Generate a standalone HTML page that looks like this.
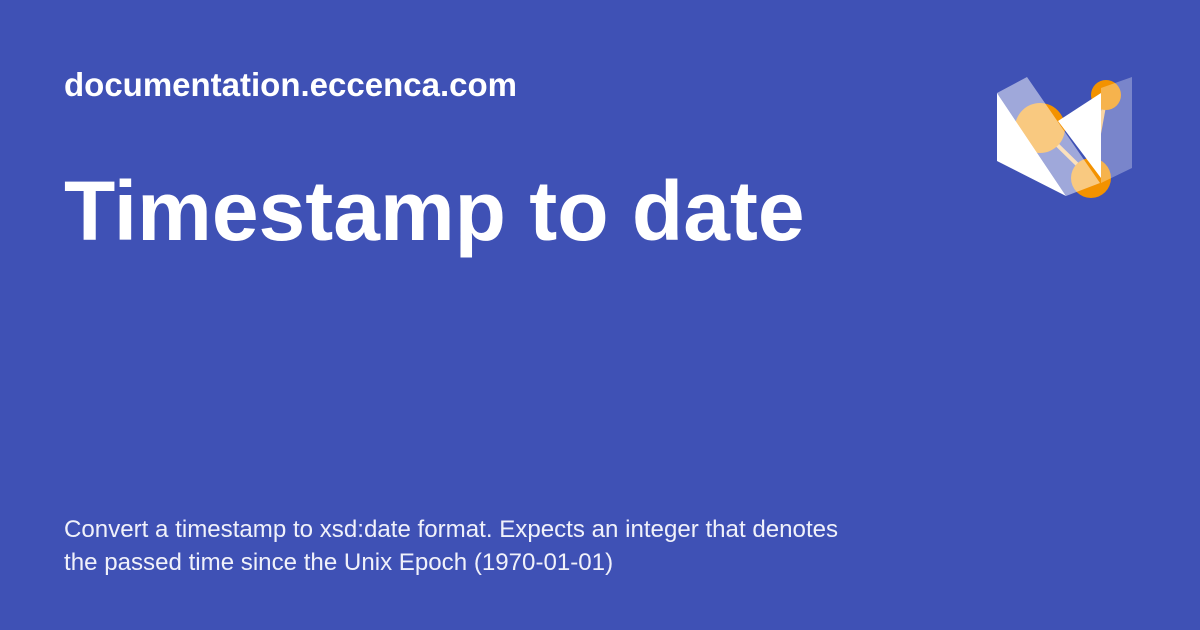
<!DOCTYPE html><html><head><style>
body{margin:0;width:1200px;height:630px;background:#3f51b5;font-family:"Liberation Sans",sans-serif;color:#fff;position:relative;overflow:hidden}
.d{position:absolute;left:64px;top:66px;font-size:33px;font-weight:bold}
.t{position:absolute;left:64px;top:163px;font-size:84px;font-weight:bold}
.p{position:absolute;left:64px;top:513px;font-size:24.1px;line-height:33px;color:#f0f1fa}
</style></head><body>
<div class="d">documentation.eccenca.com</div>
<div class="t">Timestamp to date</div>
<div class="p">Convert a timestamp to xsd:date format. Expects an integer that denotes<br>the passed time since the Unix Epoch (1970-01-01)</div>
<svg style="position:absolute;left:0;top:0" width="1200" height="630">
<line x1="1040" y1="128" x2="1091" y2="178" stroke="#f7c27a" stroke-width="4"/>
<line x1="1106" y1="95" x2="1091" y2="178" stroke="#f7c27a" stroke-width="4"/>
<circle cx="1040" cy="128" r="25" fill="#f39200"/>
<circle cx="1106" cy="95" r="15" fill="#f39200"/>
<circle cx="1091" cy="178" r="20" fill="#f39200"/>
<polygon points="997,93 997,161 1066,196" fill="#fff"/>
<polygon points="1058,121 1101,93 1101,178" fill="#fff"/>
<polygon points="997,93 1027,77 1100,183 1066,196" fill="#fff" fill-opacity="0.5"/>
<polygon points="1101,88 1132,77 1132,168 1101,183" fill="#fff" fill-opacity="0.3"/>
</svg>
</body></html>
